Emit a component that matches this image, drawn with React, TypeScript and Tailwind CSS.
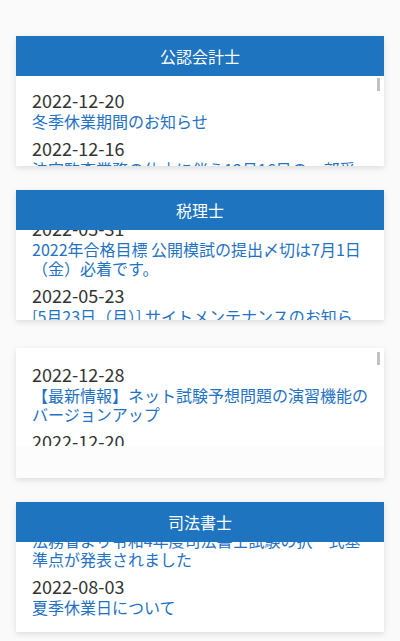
import React from "react";

type News = { date: string; title: string };

const font = { fontFamily: '"Noto Sans CJK JP", "Noto Sans", sans-serif' };

const cpa: News[] = [
  { date: "2022-12-20", title: "冬季休業期間のお知らせ" },
  { date: "2022-12-16", title: "法定監査業務の休止に伴う12月16日の一部受付停止" },
];

const tax: News[] = [
  { date: "2022-05-31", title: "2022年合格目標 公開模試の提出〆切は7月1日（金）必着です。" },
  { date: "2022-05-23", title: "[5月23日（月）] サイトメンテナンスのお知らせ" },
];

const net: News[] = [
  { date: "2022-12-28", title: "【最新情報】ネット試験予想問題の演習機能のバージョンアップ" },
  { date: "2022-12-20", title: "冬季休業期間のお知らせ" },
];

const judicial: News[] = [
  { date: "2022-09-01", title: "法務省より令和4年度司法書士試験の択一式基準点が発表されました" },
  { date: "2022-08-03", title: "夏季休業日について" },
];

function NewsList({ items }: { items: News[] }) {
  return (
    <ul>
      {items.map((n, i) => (
        <li key={i} className="mb-[5px]">
          <p className="text-[18px] leading-[24px] text-[#333]">{n.date}</p>
          <a href="#" className="block text-base leading-[19px] text-[#1f72c4]">
            {n.title}
          </a>
        </li>
      ))}
    </ul>
  );
}

function Header({ title }: { title: string }) {
  return (
    <div className="relative z-10 h-10 bg-[#1e74be] flex items-center justify-center text-white text-base">
      {title}
    </div>
  );
}

export default function App() {
  return (
    <div className="min-h-[641px] bg-[#fafafa] px-4 pt-9" style={font}>
      {/* 公認会計士 */}
      <div className="relative h-[130px] bg-white overflow-hidden shadow-[0_2px_6px_rgba(0,0,0,0.12)]">
        <Header title="公認会計士" />
        <div className="px-4 pt-3">
          <NewsList items={cpa} />
        </div>
        <div className="absolute right-[4px] top-[42px] w-[3px] h-[13px] bg-[#c1c1c1]" />
      </div>

      {/* 税理士 */}
      <div className="relative mt-6 h-[130px] bg-white overflow-hidden shadow-[0_2px_6px_rgba(0,0,0,0.12)]">
        <Header title="税理士" />
        <div className="px-4 pt-3 -mt-[26px]">
          <NewsList items={tax} />
        </div>
      </div>

      {/* ネット試験 */}
      <div className="relative mt-7 h-[130px] bg-white overflow-hidden flex flex-col shadow-[0_2px_6px_rgba(0,0,0,0.12)]">
        <div className="h-[98px] shrink-0 overflow-hidden px-4 pt-[14px]">
          <NewsList items={net} />
        </div>
        <div className="flex-1 bg-[#fcfcfc]" />
        <div className="absolute right-[4px] top-[4px] w-[3px] h-[13px] bg-[#c1c1c1]" />
      </div>

      {/* 司法書士 */}
      <div className="relative mt-6 h-[130px] bg-white overflow-hidden shadow-[0_2px_6px_rgba(0,0,0,0.12)]">
        <Header title="司法書士" />
        <div className="px-4 pt-3 -mt-[47px]">
          <NewsList items={judicial} />
        </div>
      </div>
    </div>
  );
}
